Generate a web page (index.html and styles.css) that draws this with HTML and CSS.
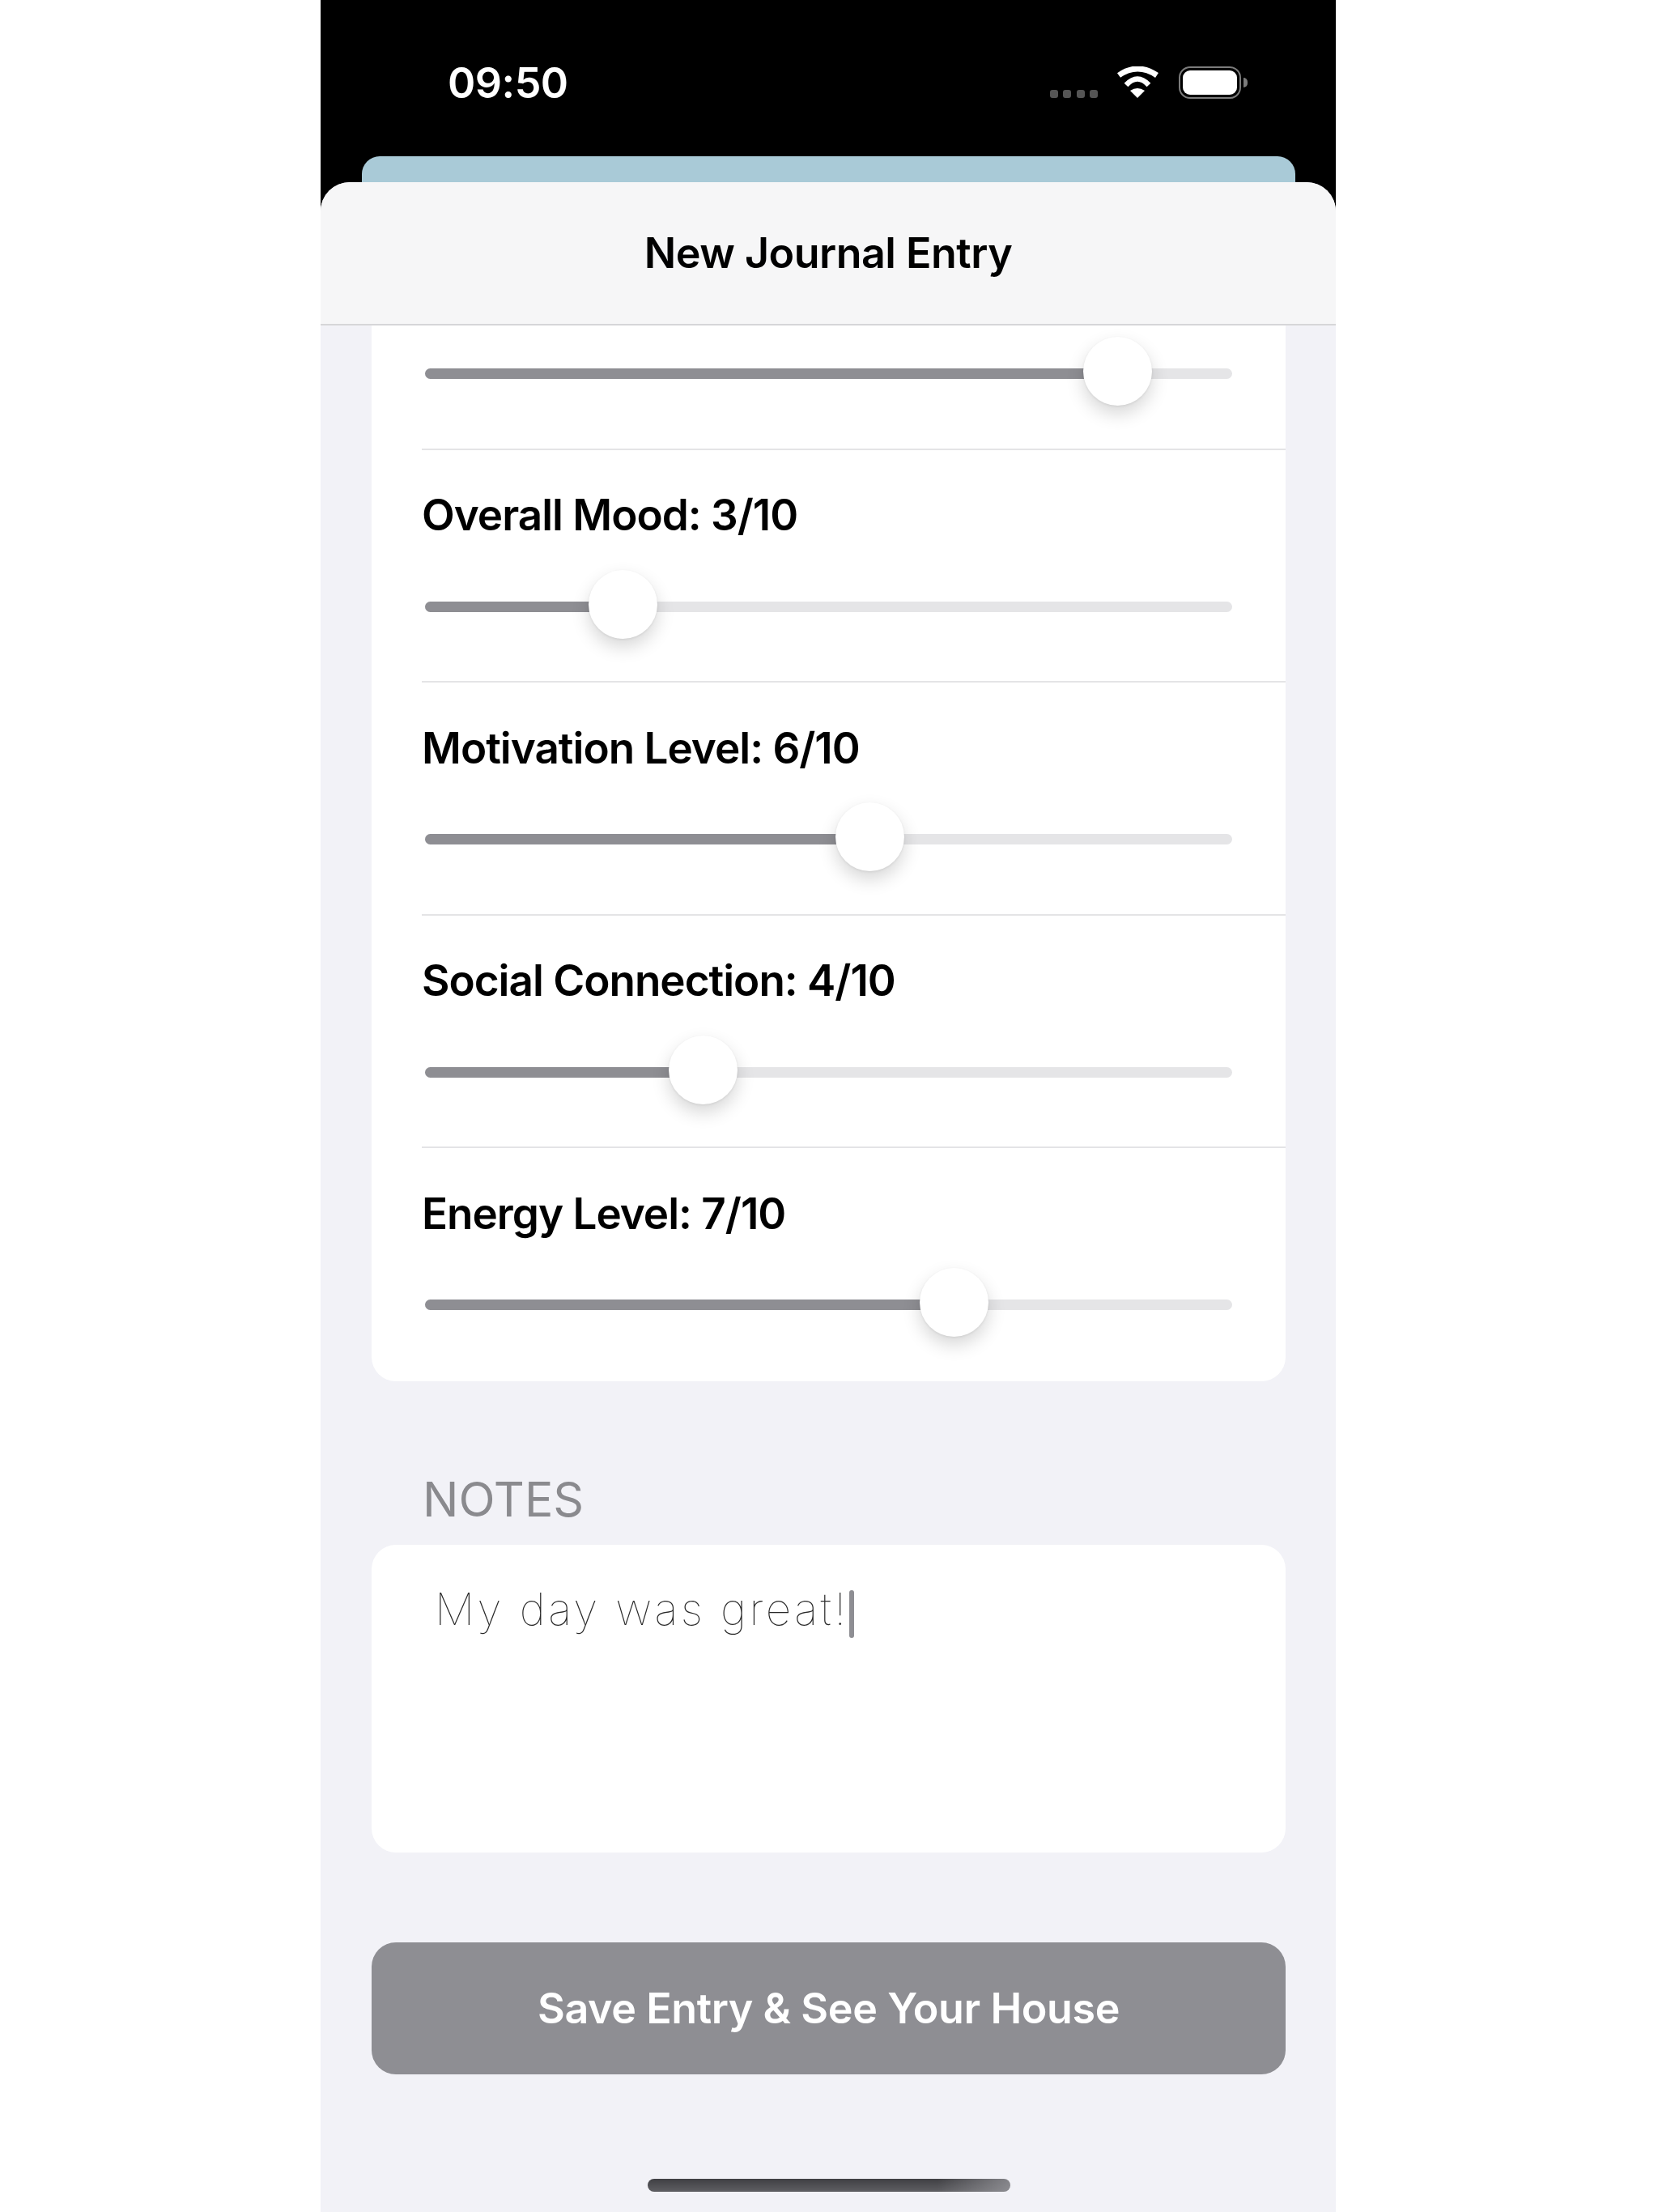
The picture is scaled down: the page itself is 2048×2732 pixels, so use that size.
FILE: index.html
```html
<!DOCTYPE html>
<html lang="en">
<head>
  <meta charset="UTF-8">
  <title>New Journal Entry</title>
  <link rel="stylesheet" href="styles.css">
</head>
<body>
  <div class="phone">
    <div class="status-bar">
      <span class="time">09:50</span>
      <div class="status-icons">
        <div class="signal">
          <span></span><span></span><span></span><span></span>
        </div>
        <svg class="wifi" width="53" height="39" viewBox="0 0 53 39">
          <path d="M3 11 Q26 -5 50 11" fill="none" stroke="#fff" stroke-width="7"/>
          <path d="M12 23 Q26 8 40 23" fill="none" stroke="#fff" stroke-width="6.5"/>
          <path d="M17 30 Q26 24 35 30 L26 39 Z" fill="#fff"/>
        </svg>
        <div class="battery"><div class="battery-level"></div></div>
        <div class="battery-tip"></div>
      </div>
    </div>
    <div class="back-card"></div>

    <div class="sheet">
      <header class="sheet-header">New Journal Entry</header>

      <div class="card">
        <div class="row row-first">
          <div class="slider">
            <div class="fill" style="width: 85.8%"></div>
            <div class="thumb" style="left: 85.8%"></div>
          </div>
        </div>
        <div class="row">
          <div class="row-label">Overall Mood: 3/10</div>
          <div class="slider">
            <div class="fill" style="width: 24.5%"></div>
            <div class="thumb" style="left: 24.5%"></div>
          </div>
        </div>
        <div class="row">
          <div class="row-label">Motivation Level: 6/10</div>
          <div class="slider">
            <div class="fill" style="width: 55.07%"></div>
            <div class="thumb" style="left: 55.07%"></div>
          </div>
        </div>
        <div class="row">
          <div class="row-label">Social Connection: 4/10</div>
          <div class="slider">
            <div class="fill" style="width: 34.5%"></div>
            <div class="thumb" style="left: 34.5%"></div>
          </div>
        </div>
        <div class="row">
          <div class="row-label">Energy Level: 7/10</div>
          <div class="slider">
            <div class="fill" style="width: 65.5%"></div>
            <div class="thumb" style="left: 65.5%"></div>
          </div>
        </div>
      </div>

      <div class="section-title">NOTES</div>
      <div class="notes">
        <span class="notes-text">My day was great!</span><span class="caret"></span>
      </div>

      <button class="save-btn">Save Entry &amp; See Your House</button>

      <div class="home-indicator"></div>
    </div>
  </div>
</body>
</html>
```

FILE: styles.css
```css
body {
  margin: 0;
  background-color: #fff;
  font-family: Inter, "Liberation Sans", sans-serif;
  color: #000;
}

.phone {
  width: 1254px;
  height: 2732px;
  margin-left: 396px;
  background-color: #000;
  overflow: hidden;
}

.status-bar {
  display: flex;
  justify-content: space-between;
  height: 193px;
  padding: 82px 109px 0 157px;
  box-sizing: border-box;
}

.time {
  font-size: 52px;
  line-height: 42px;
  font-weight: 600;
  letter-spacing: -0.5px;
  color: #fff;
}

.status-icons {
  display: flex;
  align-items: flex-start;
}

.signal {
  display: flex;
  gap: 6.5px;
  margin-top: 29px;
  margin-right: 23px;
}

.signal span {
  width: 10px;
  height: 10px;
  border-radius: 3px;
  background-color: #555;
}

.wifi {
  margin-right: 24px;
}

.battery {
  width: 77px;
  height: 40px;
  box-sizing: border-box;
  padding: 3px;
  border: 2px solid #7c7c7c;
  border-radius: 14px;
}

.battery-level {
  height: 100%;
  background-color: #fff;
  border-radius: 9px;
}

.battery-tip {
  width: 5px;
  height: 12px;
  margin-top: 14px;
  margin-left: 3px;
  background-color: #7c7c7c;
  border-radius: 0 6px 6px 0;
}

.back-card {
  height: 32px;
  margin: 0 50px 0 51px;
  background-color: #a9cad7;
  border-radius: 22px 22px 0 0;
}

.sheet {
  height: 2507px;
  background-color: #f2f2f7;
  border-radius: 36px 36px 0 0;
  overflow: hidden;
}

.sheet-header {
  display: flex;
  align-items: center;
  justify-content: center;
  height: 175px;
  background-color: #f6f6f7;
  border-bottom: 2px solid #d6d6d8;
  font-size: 52px;
  font-weight: 600;
  letter-spacing: -0.5px;
}

.card {
  margin: 0 62px 0 63px;
  background-color: #fff;
  border-radius: 0 0 30px 30px;
}

.row {
  margin-left: 62px;
  height: 287.5px;
  box-sizing: border-box;
  padding-top: 45.5px;
  border-bottom: 2px solid #e4e4e6;
}

.row:last-child {
  border-bottom: none;
}

.row-first {
  height: 153.5px;
  padding-top: 17px;
}

.row-label {
  height: 70px;
  line-height: 70px;
  font-size: 53px;
  font-weight: 600;
  letter-spacing: -1px;
}

.slider {
  position: relative;
  height: 13px;
  margin: 36px 66px 36px 4px;
  background-color: #e5e5e7;
  border-radius: 7px;
}

.row-label + .slider {
  margin-top: 71.5px;
}

.fill {
  height: 100%;
  background-color: #8e8e93;
  border-radius: 7px 0 0 7px;
}

.thumb {
  position: absolute;
  top: -39px;
  width: 85px;
  height: 85px;
  margin-left: -42.5px;
  background-color: #fff;
  border-radius: 50%;
  box-shadow: 0 10px 22px rgba(0, 0, 0, 0.16), 0 1px 3px rgba(0, 0, 0, 0.08);
}

.section-title {
  margin: 111px 0 0 126px;
  height: 70px;
  line-height: 70px;
  font-size: 59px;
  color: #8a8a8e;
}

.notes {
  display: flex;
  align-items: flex-start;
  height: 380.5px;
  margin: 21px 62px 0 63px;
  padding: 0 0 0 78px;
  box-sizing: border-box;
  background-color: #fff;
  border-radius: 30px;
}

.notes-text {
  margin-top: 44px;
  font-size: 55px;
  line-height: 70px;
  font-weight: 100;
  letter-spacing: 3.4px;
  color: #2a2a2a;
}

.caret {
  width: 6px;
  height: 59px;
  margin-top: 56px;
  margin-left: 1px;
  background-color: #8e8e93;
  border-radius: 3px;
}

.save-btn {
  display: block;
  width: 1129px;
  height: 163px;
  margin: 111px 0 0 63px;
  background-color: #8e8e93;
  border: none;
  border-radius: 30px;
  font-family: inherit;
  font-size: 52px;
  font-weight: 600;
  letter-spacing: -0.4px;
  color: #fff;
}

.home-indicator {
  width: 448px;
  height: 16px;
  margin: 129px 0 0 404px;
  border-radius: 8px;
  background: linear-gradient(to right, transparent 80%, rgba(160, 160, 165, 0.7) 100%), linear-gradient(to bottom, #3f3f43, #5f5f63);
}
```
